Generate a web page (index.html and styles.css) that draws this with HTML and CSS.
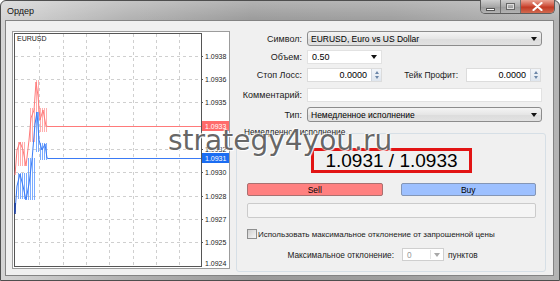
FILE: index.html
```html
<!DOCTYPE html>
<html lang="ru">
<head>
<meta charset="utf-8">
<title>Ордер</title>
<link rel="stylesheet" href="styles.css">
</head>
<body>
<div class="window">
  <div class="titlebar">
    <span class="caption">Ордер</span>
    <div class="controls">
      <span class="wbtn wmin"><i></i></span>
      <span class="wbtn wmax"><i></i></span>
      <span class="wbtn wclose"><svg width="11" height="9" viewBox="0 0 11 9"><path d="M1.5 1 L9.5 8 M9.5 1 L1.5 8" stroke="#fff" stroke-width="2.2" stroke-linecap="round"/></svg></span>
    </div>
  </div>
  <div class="client">
    <div class="chart">
      <svg width="218" height="238" viewBox="12 31 218 238">
        <defs>
          <pattern id="pk" width="2" height="4" patternUnits="userSpaceOnUse"><rect width="1" height="4" fill="#ff9a9a"/></pattern>
          <pattern id="bl" width="2" height="4" patternUnits="userSpaceOnUse"><rect width="1" height="4" fill="#5c98ff"/></pattern>
        </defs>
        <rect x="12.5" y="31.5" width="217" height="237" fill="#fff" stroke="#9c9c9c"/>
        <rect x="14.5" y="33.5" width="187" height="233" fill="#fff" stroke="#555"/>
        <g stroke="#cfcfcf" stroke-dasharray="3 3">
          <path d="M39.5 34V266M63.5 34V266M86.5 34V266M109.5 34V266M133.5 34V266M156.5 34V266M179.5 34V266"/>
          <path d="M15 56.5H201M15 79.5H201M15 102.5H201M15 126.5H201M15 149.5H201M15 172.5H201M15 196.5H201M15 219.5H201M15 242.5H201"/>
        </g>
        <g stroke="#555">
          <path d="M201 56.5H203M201 79.5H203M201 102.5H203M201 149.5H203M201 172.5H203M201 196.5H203M201 219.5H203M201 242.5H203"/>
        </g>
        <g opacity="0.8">
          <rect x="17" y="142" width="9" height="24" fill="url(#pk)"/>
          <rect x="29" y="108" width="6" height="34" fill="url(#pk)"/>
          <rect x="35" y="80" width="4" height="40" fill="url(#pk)"/>
          <rect x="39" y="108" width="9" height="24" fill="url(#pk)"/>
          <rect x="17" y="173" width="10" height="26" fill="url(#bl)"/>
          <rect x="28" y="158" width="7" height="42" fill="url(#bl)"/>
          <rect x="35" y="112" width="5" height="40" fill="url(#bl)"/>
          <rect x="40" y="143" width="8" height="17" fill="url(#bl)"/>
        </g>
        <polyline fill="none" stroke="#ff7a7a" stroke-width="1" points="15,175 17,150 20,142 23,150 26,166 29,140 31,118 34,110 36,82 38,96 40,120 43,110 46,126 48,126.5 201,126.5"/>
        <polyline fill="none" stroke="#3a7af5" stroke-width="1" points="15,212 17,186 20,174 23,186 26,200 29,184 32,160 35,124 37,112 39,140 42,150 45,144 47,158 48,158.5 201,158.5"/>
        <path d="M15 203V214" stroke="#1a3a9a" stroke-width="1.5"/>
        <text class="ax" x="17" y="41">EURUSD</text>
        <text class="ax" x="205" y="58.5">1.0938</text>
        <text class="ax" x="205" y="81.5">1.0936</text>
        <text class="ax" x="205" y="104.5">1.0935</text>
        <rect x="202" y="121" width="27" height="10" fill="#ff6b6b"/>
        <text class="ax axw" x="205" y="128.5">1.0933</text>
        <text class="ax" x="205" y="151.5">1.0932</text>
        <rect x="202" y="153" width="27" height="10" fill="#1b6df2"/>
        <text class="ax axw" x="205" y="160.5">1.0931</text>
        <text class="ax" x="205" y="174.5">1.0930</text>
        <text class="ax" x="205" y="198.5">1.0928</text>
        <text class="ax" x="205" y="221.5">1.0927</text>
        <text class="ax" x="205" y="244.5">1.0925</text>
        <text class="ax" x="205" y="266">1.0924</text>
      </svg>
    </div>
    <div class="form">
      <div class="row r1">
        <span class="lbl">Символ:</span>
        <div class="combo wide"><span class="val">EURUSD, Euro vs US Dollar</span><span class="arrow"></span></div>
      </div>
      <div class="row r2">
        <span class="lbl">Объем:</span>
        <div class="dd"><span class="val">0.50</span><span class="arrow"></span></div>
      </div>
      <div class="row r3">
        <span class="lbl">Стоп Лосс:</span>
        <div class="spin"><span class="num">0.0000</span><span class="spinbtn"><b class="up"></b><b class="down"></b></span></div>
        <span class="lbl2">Тейк Профит:</span>
        <div class="spin"><span class="num">0.0000</span><span class="spinbtn"><b class="up"></b><b class="down"></b></span></div>
      </div>
      <div class="row r4">
        <span class="lbl">Комментарий:</span>
        <div class="text wide"></div>
      </div>
      <div class="row r5">
        <span class="lbl">Тип:</span>
        <div class="combo wide"><span class="val">Немедленное исполнение</span><span class="arrow"></span></div>
      </div>
      <div class="group">
        <span class="legend">Немедленное исполнение</span>
        <div class="price">1.0931 / 1.0933</div>
        <div class="buttons">
          <span class="btn sell">Sell</span>
          <span class="btn buy">Buy</span>
        </div>
        <div class="bar"></div>
        <div class="checkrow"><span class="check"></span><span>Использовать максимальное отклонение от запрошенной цены</span></div>
        <div class="maxrow">
          <span class="maxlbl">Максимальное отклонение:</span>
          <div class="dis"><span class="val">0</span><span class="sep"></span><span class="arrow"></span></div>
          <span>пунктов</span>
        </div>
      </div>
    </div>
  </div>
  <div class="watermark">strategy4you.ru</div>
</div>
</body>
</html>
```

FILE: styles.css
```css
* { box-sizing: border-box; }
html, body { margin: 0; padding: 0; }
body {
  width: 560px;
  height: 281px;
  overflow: hidden;
  background: #fff;
  font-family: "Liberation Sans", Arial, sans-serif;
  font-size: 9px;
  color: #000;
}
.window {
  position: relative;
  width: 560px;
  height: 281px;
  border: 1px solid #4e4e4e;
  border-radius: 6px 6px 0 0;
  padding: 0 5px 4px 4px;
  background: linear-gradient(to bottom, rgba(255,255,255,0.25), rgba(255,255,255,0) 20px),
              linear-gradient(to right, #d4d4d4 0%, #b2b2b2 22%, #9a9a9a 45%, #9e9e9e 70%, #b4b4b4 100%);
  display: flex;
  flex-direction: column;
}
.titlebar {
  height: 19px;
  display: flex;
  justify-content: space-between;
  align-items: flex-start;
}
.caption {
  padding: 5px 0 0 2px;
  font-size: 9px;
  color: #111;
}
.controls {
  display: flex;
  margin-top: -1px;
  margin-right: -1px;
  height: 14px;
  border: 1px solid #5d5d5d;
  border-top: none;
  border-radius: 0 0 5px 5px;
  overflow: hidden;
}
.wbtn {
  height: 13px;
  display: flex;
  align-items: center;
  justify-content: center;
}
.wmin, .wmax {
  width: 20px;
  background: linear-gradient(to bottom, #cdcdcd, #a9a9a9 50%, #9c9c9c 51%, #b2b2b2);
  border-right: 1px solid #6f6f6f;
}
.wmin i {
  display: block;
  width: 9px;
  height: 3px;
  margin-top: 5px;
  background: #fff;
  border: 1px solid #555;
}
.wmax i {
  display: block;
  width: 9px;
  height: 7px;
  border: 1px solid #666;
  box-shadow: inset 0 0 0 1px #ddd;
}
.wclose {
  width: 33px;
  background: linear-gradient(to bottom, #e9a595, #d0533f 45%, #c23a24 55%, #d06a50);
}
.client {
  height: 256px;
  border: 1px solid #838383;
  background: #f0f0f0;
  padding: 10px 0 0 6px;
  display: flex;
  gap: 6px;
}
.chart {
  width: 218px;
  height: 238px;
}
.chart svg { display: block; }
.ax {
  font-family: "Liberation Sans", Arial, sans-serif;
  font-size: 7px;
  fill: #222;
}
.axw { fill: #fff; }
.form {
  width: 310px;
  display: flex;
  flex-direction: column;
}
.row {
  display: flex;
  align-items: center;
}
.r1 { height: 15px; }
.r2 { height: 14px; margin-top: 4px; }
.r3 { height: 14px; margin-top: 4px; }
.r4 { height: 14px; margin-top: 6px; }
.r5 { height: 15px; margin-top: 5px; }
.lbl {
  width: 66px;
  margin-right: 5px;
  text-align: right;
  color: #1a1a1a;
}
.lbl2 {
  width: 76px;
  margin-right: 8px;
  text-align: right;
  color: #1a1a1a;
  font-size: 8.5px;
}
.wide { width: 235px; }
.combo {
  height: 100%;
  border: 1px solid #8c8c8c;
  border-radius: 3px;
  background: linear-gradient(to bottom, #f4f4f4, #e6e6e6 50%, #dcdcdc 51%, #e2e2e2);
  display: flex;
  align-items: center;
  justify-content: space-between;
  padding: 0 4px 0 3px;
  font-size: 8.5px;
}
.arrow {
  width: 0;
  height: 0;
  border-left: 3px solid transparent;
  border-right: 3px solid transparent;
  border-top: 4px solid #111;
}
.dd {
  width: 75px;
  height: 100%;
  background: #fff;
  border: 1px solid #e2e2e2;
  display: flex;
  align-items: center;
  justify-content: space-between;
  padding: 0 4px 0 4px;
}
.spin {
  width: 75px;
  height: 100%;
  background: #fff;
  border: 1px solid #dcdcdc;
  display: flex;
  align-items: center;
}
.num {
  flex: 1;
  text-align: right;
  padding-right: 4px;
}
.spinbtn {
  width: 10px;
  height: 100%;
  border-left: 1px solid #d0d6de;
  background: linear-gradient(to bottom, #f2f5f9, #dfe6ee);
  display: flex;
  flex-direction: column;
  align-items: center;
  justify-content: space-around;
  padding: 1px 0;
}
.spinbtn b {
  width: 0;
  height: 0;
  border-left: 2.5px solid transparent;
  border-right: 2.5px solid transparent;
}
.spinbtn .up { border-bottom: 3px solid #6b86a8; }
.spinbtn .down { border-top: 3px solid #6b86a8; }
.text {
  height: 100%;
  background: #fff;
  border: 1px solid #e2e2e2;
}
.group {
  margin-top: 11px;
  height: 139px;
  border: 1px solid #d6dfe6;
  border-radius: 3px;
  padding: 0 9px 0 10px;
  display: flex;
  flex-direction: column;
}
.legend {
  align-self: flex-start;
  margin: -7px 0 0 -4px;
  height: 11px;
  line-height: 11px;
  padding: 0 1px;
  background: #f0f0f0;
  color: #1a1a1a;
  font-size: 8.3px;
}
.price {
  align-self: center;
  margin-top: 10px;
  width: 161px;
  height: 25px;
  border: 3px solid #e21414;
  font-size: 19px;
  line-height: 19px;
  text-align: center;
  color: #000;
  background: #f0f0f0;
}
.buttons {
  margin-top: 10px;
  display: flex;
  gap: 18px;
  height: 13px;
}
.btn {
  flex: 1;
  display: flex;
  align-items: center;
  justify-content: center;
  border-radius: 2px;
  font-size: 8.5px;
}
.sell {
  background: #ff8080;
  border: 1px solid #a97070;
}
.buy {
  background: #9dc0ff;
  border: 1px solid #8496b6;
}
.bar {
  margin-top: 7px;
  height: 15px;
  background: #f5f5f5;
  border: 1px solid #cbcbcb;
  border-radius: 2px;
}
.checkrow {
  margin-top: 11px;
  height: 10px;
  display: flex;
  align-items: center;
  gap: 1px;
  color: #1a1a1a;
  font-size: 8px;
}
.check {
  width: 10px;
  height: 10px;
  border: 1px solid #8e8f8f;
  background: linear-gradient(135deg, #cfcfcf, #f6f6f6);
}
.maxrow {
  margin-top: 9px;
  height: 13px;
  display: flex;
  align-items: center;
  color: #1a1a1a;
  font-size: 8.3px;
}
.maxlbl {
  width: 147px;
  margin-right: 8px;
  text-align: right;
}
.dis {
  width: 42px;
  height: 100%;
  margin-right: 4px;
  background: #fff;
  border: 1px solid #cfcfcf;
  display: flex;
  align-items: center;
  padding: 0 3px 0 4px;
}
.dis .val { flex: 1; color: #9a9a9a; }
.dis .sep {
  width: 1px;
  height: 9px;
  background: #e4e4e4;
  margin-right: 3px;
}
.dis .arrow { border-top-color: #a8a8a8; }
.watermark {
  position: absolute;
  left: 167px;
  top: 126px;
  font-family: "DejaVu Sans", Verdana, sans-serif;
  font-size: 28px;
  line-height: 28px;
  color: rgba(75, 75, 75, 0.85);
  text-shadow: 0 0 2px #fff, 1px 1px 1px rgba(255,255,255,0.9), -1px -1px 1px rgba(255,255,255,0.8);
  letter-spacing: 0;
}
```
